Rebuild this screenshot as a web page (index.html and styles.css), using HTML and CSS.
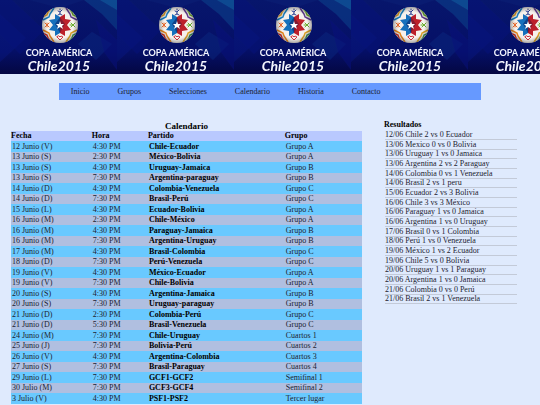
FILE: index.html
```html
<!DOCTYPE html>
<html lang="es">
<head>
    <meta charset="utf-8">
    <title>Copa América Chile 2015</title>
    <link rel="stylesheet" href="styles.css">
</head>
<body>
    <header class="banner">
        <svg class="banner-art" role="img" aria-label="Copa América Chile 2015">
            <defs>
                <linearGradient id="night" x1="0" y1="0" x2="0" y2="1">
                    <stop offset="0" stop-color="#07166c"/>
                    <stop offset="0.7" stop-color="#050f66"/>
                    <stop offset="1" stop-color="#040742"/>
                </linearGradient>
                <radialGradient id="shade">
                    <stop offset="0.75" stop-color="#000" stop-opacity="0"/>
                    <stop offset="1" stop-color="#000" stop-opacity="0.3"/>
                </radialGradient>
                <clipPath id="round"><circle cx="60" cy="25" r="18"/></clipPath>
                <pattern id="tile" width="117" height="74" patternUnits="userSpaceOnUse">
                    <rect width="117" height="74" fill="url(#night)"/>
                    <path d="M0 14 L26 38 L0 62 Z" fill="#0a1c94" opacity="0.3"/>
                    <path d="M12 0 L44 30 L20 54 L0 34 V0 Z" fill="#06127a" opacity="0.5"/>
                    <path d="M84 0 H117 V30 L102 14 Z" fill="#0b4890" opacity="0.5"/>
                    <path d="M100 0 H117 V10 Z" fill="#1264a4" opacity="0.5"/>
                    <path d="M78 44 L92 32 L112 44 L96 60 Z" fill="#0b2e84" opacity="0.4"/>
                    <path d="M96 20 L117 40 V70 L104 52 Z" fill="#07107c" opacity="0.5"/>
                    <path d="M30 0 L60 8 L84 0 Z" fill="#0c2880" opacity="0.3"/>

                    <circle cx="60" cy="25" r="18" fill="#f6f1ec"/>
                    <g clip-path="url(#round)">
                        <g transform="translate(60 25)">
                            <!-- coloured chevrons round the rim -->
                            <g fill="none" stroke-width="1.4">
                                <path d="M-17 -5 L-11 -8 L-10 -11 L-6 -17" stroke="#1783c6"/>
                                <path d="M-18 -8 L-13 -10 L-12 -13 L-9 -17" stroke="#f0aa20"/>
                                <path d="M17 -5 L11 -8 L10 -11 L6 -17" stroke="#5f3a91"/>
                                <path d="M18 -8 L13 -10 L12 -13 L9 -17" stroke="#71b52b"/>
                                <path d="M-17 5 L-11 8 L-10 11 L-6 17" stroke="#e9881d"/>
                                <path d="M-18 8 L-13 10 L-12 13 L-9 17" stroke="#d92c26"/>
                                <path d="M17 5 L11 8 L10 11 L6 17" stroke="#e0a526"/>
                                <path d="M18 8 L13 10 L12 13 L9 17" stroke="#3f9a58"/>
                            </g>
                            <path d="M0 -8 L-5 -11 L-5 -6 L-11 -5 L-7 0 L-11 5 L-5 6 L-5 11 L0 8 Z" fill="#1670bc"/>
                            <path d="M0 -8 L5 -11 L5 -6 L11 -5 L7 0 L11 5 L5 6 L5 11 L0 8 Z" fill="#bc202b"/>
                            <path d="M0 -8 L-5 -1 L0 8 Z" fill="#0c438c"/>
                            <path d="M0 -8 L5 -1 L0 8 Z" fill="#83192f"/>
                            <path d="M0 -4 L1 -1 L4 -1 L2 1 L3 4 L0 2 L-3 4 L-2 1 L-4 -1 L-1 -1 Z" fill="#fff"/>
                            <!-- little figures -->
                            <g fill="none" stroke-width="1" stroke-linecap="round">
                                <path d="M-2 -14 L0 -13 L2 -15 M0 -13 V-11 L-2 -10 M0 -11 L2 -10 M0 -16 V-15" stroke="#2b3e93"/>
                                <path d="M-15 -2 L-13 0 L-11 -2 M-15 2 L-13 0 L-11 2 M-13 -2 V2" stroke="#e4672a"/>
                                <path d="M15 -2 L13 0 L11 -2 M15 2 L13 0 L11 2 M13 0 H10" stroke="#69ae2d"/>
                                <path d="M-3 12 L0 15 L3 12 L1 11 L0 12 L-1 11 Z" stroke="#cf3340"/>
                            </g>
                        </g>
                    </g>
                    <circle cx="60" cy="25" r="18" fill="url(#shade)"/>
                    <text class="cup" x="59" y="56">COPA AMÉRICA</text>
                    <text class="host" x="59" y="71">Chile2015</text>
                </pattern>
            </defs>
            <rect width="100%" height="100%" fill="url(#tile)"/>
        </svg>
    </header>

    <nav class="menu">
        <a href="#">Inicio</a>
        <a href="#">Grupos</a>
        <a href="#">Selecciones</a>
        <a href="#">Calendario</a>
        <a href="#">Historia</a>
        <a href="#">Contacto</a>
    </nav>

    <main class="content">
        <table class="calendar">
            <caption>Calendario</caption>
            <thead>
                <tr><th class="date">Fecha</th><th class="hour">Hora</th><th class="match">Partido</th><th>Grupo</th></tr>
            </thead>
            <tbody>
                <tr><td>12 Junio (V)</td><td>4:30 PM</td><td><b>Chile-Ecuador</b></td><td>Grupo A</td></tr>
                <tr><td>13 Junio (S)</td><td>2:30 PM</td><td><b>México-Bolivia</b></td><td>Grupo A</td></tr>
                <tr><td>13 Junio (S)</td><td>4:30 PM</td><td><b>Uruguay-Jamaica</b></td><td>Grupo B</td></tr>
                <tr><td>13 Junio (S)</td><td>7:30 PM</td><td><b>Argentina-paraguay</b></td><td>Grupo B</td></tr>
                <tr><td>14 Junio (D)</td><td>4:30 PM</td><td><b>Colombia-Venezuela</b></td><td>Grupo C</td></tr>
                <tr><td>14 Junio (D)</td><td>7:30 PM</td><td><b>Brasil-Perú</b></td><td>Grupo C</td></tr>
                <tr><td>15 Junio (L)</td><td>4:30 PM</td><td><b>Ecuador-Bolivia</b></td><td>Grupo A</td></tr>
                <tr><td>16 Junio (M)</td><td>2:30 PM</td><td><b>Chile-México</b></td><td>Grupo A</td></tr>
                <tr><td>16 Junio (M)</td><td>4:30 PM</td><td><b>Paraguay-Jamaica</b></td><td>Grupo B</td></tr>
                <tr><td>16 Junio (M)</td><td>7:30 PM</td><td><b>Argentina-Uruguay</b></td><td>Grupo B</td></tr>
                <tr><td>17 Junio (M)</td><td>4:30 PM</td><td><b>Brasil-Colombia</b></td><td>Grupo C</td></tr>
                <tr><td>18 Junio (D)</td><td>7:30 PM</td><td><b>Perú-Venezuela</b></td><td>Grupo C</td></tr>
                <tr><td>19 Junio (V)</td><td>4:30 PM</td><td><b>México-Ecuador</b></td><td>Grupo A</td></tr>
                <tr><td>19 Junio (V)</td><td>7:30 PM</td><td><b>Chile-Bolivia</b></td><td>Grupo A</td></tr>
                <tr><td>20 Junio (S)</td><td>4:30 PM</td><td><b>Argentina-Jamaica</b></td><td>Grupo B</td></tr>
                <tr><td>20 Junio (S)</td><td>7:30 PM</td><td><b>Uruguay-paraguay</b></td><td>Grupo B</td></tr>
                <tr><td>21 Junio (D)</td><td>2:30 PM</td><td><b>Colombia-Perú</b></td><td>Grupo C</td></tr>
                <tr><td>21 Junio (D)</td><td>5:30 PM</td><td><b>Brasil-Venezuela</b></td><td>Grupo C</td></tr>
                <tr><td>24 Junio (M)</td><td>7:30 PM</td><td><b>Chile-Uruguay</b></td><td>Cuartos 1</td></tr>
                <tr><td>25 Junio (J)</td><td>7:30 PM</td><td><b>Bolivia-Perú</b></td><td>Cuartos 2</td></tr>
                <tr><td>26 Junio (V)</td><td>4:30 PM</td><td><b>Argentina-Colombia</b></td><td>Cuartos 3</td></tr>
                <tr><td>27 Junio (S)</td><td>7:30 PM</td><td><b>Brasil-Paraguay</b></td><td>Cuartos 4</td></tr>
                <tr><td>29 Junio (L)</td><td>7:30 PM</td><td><b>GCF1-GCF2</b></td><td>Semifinal 1</td></tr>
                <tr><td>30 Julio (M)</td><td>7:30 PM</td><td><b>GCF3-GCF4</b></td><td>Semifinal 2</td></tr>
                <tr><td>3 Julio (V)</td><td>4:30 PM</td><td><b>PSF1-PSF2</b></td><td>Tercer lugar</td></tr>
            </tbody>
        </table>

        <section class="results">
            <h2>Resultados</h2>
            <ul>
                <li>12/06 Chile 2 vs 0 Ecuador</li>
                <li>13/06 Mexico 0 vs 0 Bolivia</li>
                <li>13/06 Uruguay 1 vs 0 Jamaica</li>
                <li>13/06 Argentina 2 vs 2 Paraguay</li>
                <li>14/06 Colombia 0 vs 1 Venezuela</li>
                <li>14/06 Brasil 2 vs 1 peru</li>
                <li>15/06 Ecuador 2 vs 3 Bolivia</li>
                <li>16/06 Chile 3 vs 3 México</li>
                <li>16/06 Paraguay 1 vs 0 Jamaica</li>
                <li>16/06 Argentina 1 vs 0 Uruguay</li>
                <li>17/06 Brasil 0 vs 1 Colombia</li>
                <li>18/06 Perú 1 vs 0 Venezuela</li>
                <li>19/06 México 1 vs 2 Ecuador</li>
                <li>19/06 Chile 5 vs 0 Bolivia</li>
                <li>20/06 Uruguay 1 vs 1 Paraguay</li>
                <li>20/06 Argentina 1 vs 0 Jamaica</li>
                <li>21/06 Colombia 0 vs 0 Perú</li>
                <li>21/06 Brasil 2 vs 1 Venezuela</li>
            </ul>
        </section>
    </main>
</body>
</html>
```

FILE: styles.css
```css
body {
    margin: 0;
    background: #dfeafd;
    color: #1c2230;
    font-family: "Liberation Serif", "Times New Roman", serif;
    font-size: 8px;
}

.banner-art {
    display: block;
    width: 100%;
    height: 74px;
}

.cup,
.host {
    fill: #f4f6ff;
    font-family: Lato, sans-serif;
    font-weight: bold;
    text-anchor: middle;
}

.cup {
    font-size: 9px;
}

.host {
    font-size: 14px;
    font-style: italic;
}

.menu {
    display: flex;
    gap: 28px;
    width: 76%;
    margin: 9px auto 0;
    padding: 4px 0 4px 12px;
    background: #6699ff;
    line-height: 9px;
}

.menu a {
    color: #1c2230;
    text-decoration: none;
}

.content {
    display: flex;
    align-items: flex-start;
    gap: 22px;
    padding: 20px 0 0 11px;
}

.calendar {
    width: 351px;
    flex: 0 1 auto;
    table-layout: fixed;
    border-collapse: collapse;
}

.calendar caption {
    padding-top: 1px;
    color: #000;
    font-size: 9px;
    font-weight: bold;
    line-height: 10px;
}

.calendar th {
    padding: 0;
    background: #b9c9fe;
    color: #000;
    line-height: 10px;
    text-align: left;
}

.calendar td {
    padding: 0 0 0 1px;
    background: #b0bfe0;
    line-height: 10px;
}

.calendar tbody tr:nth-child(odd) td {
    background: #69c9ff;
    line-height: 11px;
}

.calendar b {
    color: #000;
}

.date {
    width: 23%;
}

.hour {
    width: 16%;
}

.match {
    width: 39%;
}

.results h2 {
    margin: 0;
    color: #000;
    font-size: 8px;
    line-height: 10px;
}

.results ul {
    width: 132px;
    margin: 0;
    padding: 0 0 0 1px;
    list-style: none;
}

.results li {
    border-bottom: 1px solid #c3cad8;
    line-height: 9px;
}

.results li:nth-child(3n) {
    line-height: 8px;
}
```
